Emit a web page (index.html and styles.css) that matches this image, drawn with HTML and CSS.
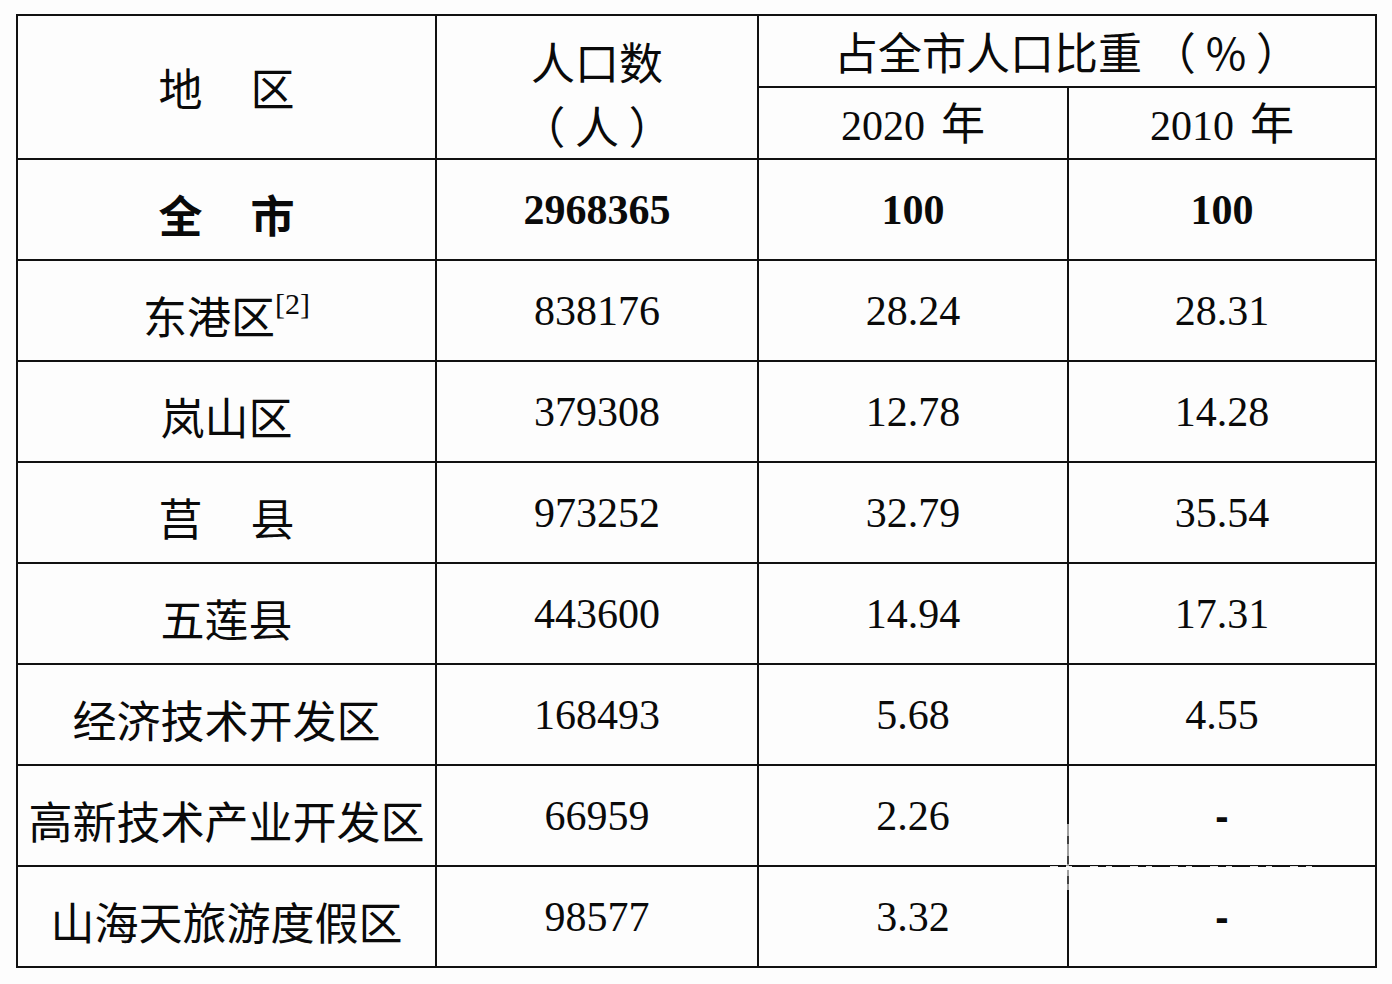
FILE: index.html
```html
<!DOCTYPE html>
<html lang="zh-CN">
<head>
<meta charset="utf-8">
<title>人口数</title>
<link rel="stylesheet" href="styles.css">
</head>
<body>
<div class="wrap">
<table class="pop">
  <colgroup>
    <col class="c1"><col class="c2"><col class="c3"><col class="c4">
  </colgroup>
  <thead>
    <tr class="hsub">
      <th rowspan="2" class="cjk region-head">地<span class="gap"></span>区</th>
      <th rowspan="2" class="cjk count-head"><span class="l1">人口数</span><span class="l2">（ 人 ）</span></th>
      <th colspan="2" class="cjk share-head">占全市人口比重 （ % ）</th>
    </tr>
    <tr class="hsub">
      <th class="year"><span class="num">2020</span><span class="cjk nian">年</span></th>
      <th class="year"><span class="num">2010</span><span class="cjk nian">年</span></th>
    </tr>
  </thead>
  <tbody>
    <tr class="total">
      <td class="cjk bold">全<span class="gap"></span>市</td>
      <td class="num bold">2968365</td>
      <td class="num bold">100</td>
      <td class="num bold">100</td>
    </tr>
    <tr>
      <td class="cjk">东港区<sup class="note">[2]</sup></td>
      <td class="num">838176</td>
      <td class="num">28.24</td>
      <td class="num">28.31</td>
    </tr>
    <tr>
      <td class="cjk">岚山区</td>
      <td class="num">379308</td>
      <td class="num">12.78</td>
      <td class="num">14.28</td>
    </tr>
    <tr>
      <td class="cjk">莒<span class="gap"></span>县</td>
      <td class="num">973252</td>
      <td class="num">32.79</td>
      <td class="num">35.54</td>
    </tr>
    <tr>
      <td class="cjk">五莲县</td>
      <td class="num">443600</td>
      <td class="num">14.94</td>
      <td class="num">17.31</td>
    </tr>
    <tr>
      <td class="cjk">经济技术开发区</td>
      <td class="num">168493</td>
      <td class="num">5.68</td>
      <td class="num">4.55</td>
    </tr>
    <tr>
      <td class="cjk">高新技术产业开发区</td>
      <td class="num">66959</td>
      <td class="num">2.26</td>
      <td class="dash">-</td>
    </tr>
    <tr>
      <td class="cjk">山海天旅游度假区</td>
      <td class="num">98577</td>
      <td class="num">3.32</td>
      <td class="dash">-</td>
    </tr>
  </tbody>
</table>
<div class="wm-h"></div>
<div class="wm-v"></div>
</div>
</body>
</html>
```

FILE: styles.css
```css
html, body {
  margin: 0;
  padding: 0;
  background: #fdfdfd;
}

body {
  padding: 14px 0 0 16px;
  color: #0a0a0a;
}

.wrap {
  position: relative;
  width: 1359px;
}

.pop {
  border-collapse: collapse;
  table-layout: fixed;
  width: 1359px;
}

.c1 { width: 419px; }
.c2 { width: 322px; }
.c3 { width: 310px; }
.c4 { width: 308px; }

.pop th,
.pop td {
  border: 2px solid #111;
  padding: 0;
  text-align: center;
  vertical-align: middle;
  font-weight: normal;
  white-space: nowrap;
  overflow: hidden;
}

.hsub { height: 72px; }
.pop tbody tr { height: 101px; }

.cjk {
  font-family: "Noto Sans CJK SC", "Noto Sans", sans-serif;
  font-size: 44px;
  line-height: 1;
}

.num {
  font-family: "Liberation Serif", "Times New Roman", serif;
  font-size: 42px;
  line-height: 1;
}

.pop td.bold { font-weight: bold; }

.gap {
  display: inline-block;
  width: 48px;
}

.region-head {
  padding-top: 4px;
}

.count-head .l1,
.count-head .l2 {
  display: block;
}

.count-head .l1 {
  margin-top: 12px;
}

.count-head .l2 {
  margin-top: 20px;
}

.share-head {
  padding-top: 6px;
}

.year {
  padding-top: 6px;
}

.nian {
  margin-left: 16px;
}

.note {
  font-family: "Liberation Serif", "Times New Roman", serif;
  font-size: 30px;
  vertical-align: top;
  position: relative;
  top: -4px;
  line-height: 1;
}

.dash {
  font-family: "Liberation Sans", Arial, sans-serif;
  font-size: 40px;
  line-height: 1;
}

.pop td.dash {
  font-weight: 900;
}

.pop td.cjk {
  padding-top: 8px;
}

/* faint watermark breaking the grid line */
.wm-h {
  position: absolute;
  left: 1016px;
  top: 852px;
  width: 288px;
  height: 4px;
  background: repeating-linear-gradient(90deg,
    rgba(253,253,253,0) 0 18px,
    rgba(253,253,253,0.9) 18px 26px,
    rgba(253,253,253,0) 26px 34px,
    rgba(253,253,253,0.9) 34px 40px);
  pointer-events: none;
}

.wm-v {
  position: absolute;
  left: 1050px;
  top: 810px;
  width: 3px;
  height: 66px;
  background: repeating-linear-gradient(180deg,
    rgba(253,253,253,0.6) 0 12px,
    rgba(253,253,253,0.2) 12px 20px);
  pointer-events: none;
}
```
